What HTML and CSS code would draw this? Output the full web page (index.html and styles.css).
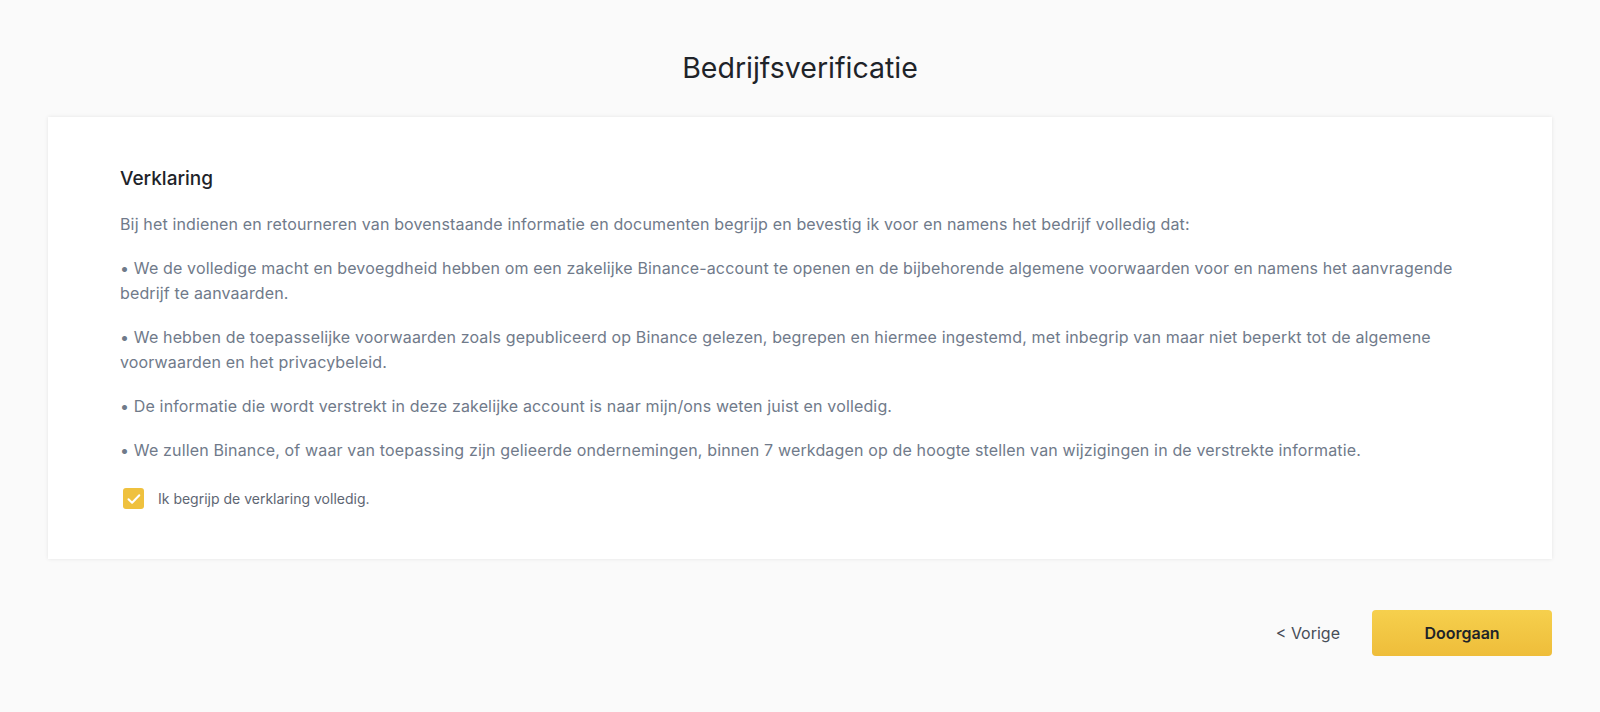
FILE: index.html
```html
<!DOCTYPE html>
<html lang="nl">
<head>
    <meta charset="UTF-8">
    <meta name="viewport" content="width=device-width, initial-scale=1.0">
    <title>Bedrijfsverificatie</title>
    <link rel="stylesheet" href="styles.css">
</head>
<body>
    <div class="page">
        <h1 class="page-title">Bedrijfsverificatie</h1>

        <!-- Declaration card -->
        <div class="card">
            <h2 class="card-title">Verklaring</h2>
            <p>Bij het indienen en retourneren van bovenstaande informatie en documenten begrijp en bevestig ik voor en namens het bedrijf volledig dat:</p>
            <p>• We de volledige macht en bevoegdheid hebben om een zakelijke Binance-account te openen en de bijbehorende algemene voorwaarden voor en namens het aanvragende bedrijf te aanvaarden.</p>
            <p>• We hebben de toepasselijke voorwaarden zoals gepubliceerd op Binance gelezen, begrepen en hiermee ingestemd, met inbegrip van maar niet beperkt tot de algemene voorwaarden en het privacybeleid.</p>
            <p>• De informatie die wordt verstrekt in deze zakelijke account is naar mijn/ons weten juist en volledig.</p>
            <p>• We zullen Binance, of waar van toepassing zijn gelieerde ondernemingen, binnen 7 werkdagen op de hoogte stellen van wijzigingen in de verstrekte informatie.</p>

            <label class="agree">
                <span class="checkbox">
                    <svg width="16" height="16" viewBox="0 0 16 16"><path d="M2.5 8.2l3.6 3.6 7.2-7.6" fill="none" stroke="#fff" stroke-width="2" stroke-linecap="round" stroke-linejoin="round"/></svg>
                </span>
                <span class="agree-text">Ik begrijp de verklaring volledig.</span>
            </label>
        </div>

        <!-- Navigation -->
        <div class="actions">
            <button class="back-btn">&lt; Vorige</button>
            <button class="next-btn">Doorgaan</button>
        </div>
    </div>
</body>
</html>
```

FILE: styles.css
```css
/* General styling */
body {
    font-family: Inter, 'Noto Sans', sans-serif;
    margin: 0;
    background-color: #fafafa;
    color: #1e2329;
}

.page {
    padding: 0 48px;
}

.page-title {
    margin: 0;
    padding: 49px 0 30px;
    text-align: center;
    font-size: 28.5px;
    font-weight: 400;
    line-height: 38px;
    color: #1e2329;
}

/* Card */
.card {
    background-color: #fff;
    padding: 48px 72px 50px;
    box-shadow: 0 0 4px rgba(0, 0, 0, 0.09);
}

.card-title {
    margin: 0 0 19px;
    font-size: 19px;
    font-weight: 500;
    line-height: 28px;
}

.card p {
    margin: 0 0 19px;
    font-size: 16px;
    letter-spacing: 0.15px;
    line-height: 25px;
    color: #707a8a;
}

/* Checkbox */
.agree {
    display: flex;
    align-items: center;
    gap: 14px;
    padding-left: 3px;
    margin-top: 25px;
}

.checkbox {
    width: 21px;
    height: 21px;
    border-radius: 3px;
    background-color: #efc13e;
    display: flex;
    align-items: center;
    justify-content: center;
}

.agree-text {
    font-size: 14px;
    color: #5e6673;
}

/* Bottom buttons */
.actions {
    display: flex;
    justify-content: flex-end;
    align-items: center;
    gap: 32px;
    margin-top: 51px;
}

button {
    font-family: inherit;
    border: none;
    cursor: pointer;
}

.back-btn {
    background: none;
    padding: 0;
    font-size: 16px;
    color: #474d57;
}

.next-btn {
    width: 180px;
    height: 46px;
    border-radius: 4px;
    background-image: linear-gradient(180deg, #f6d04d 0%, #eebd3a 100%);
    font-size: 16px;
    font-weight: 600;
    color: #1e2329;
}
```
